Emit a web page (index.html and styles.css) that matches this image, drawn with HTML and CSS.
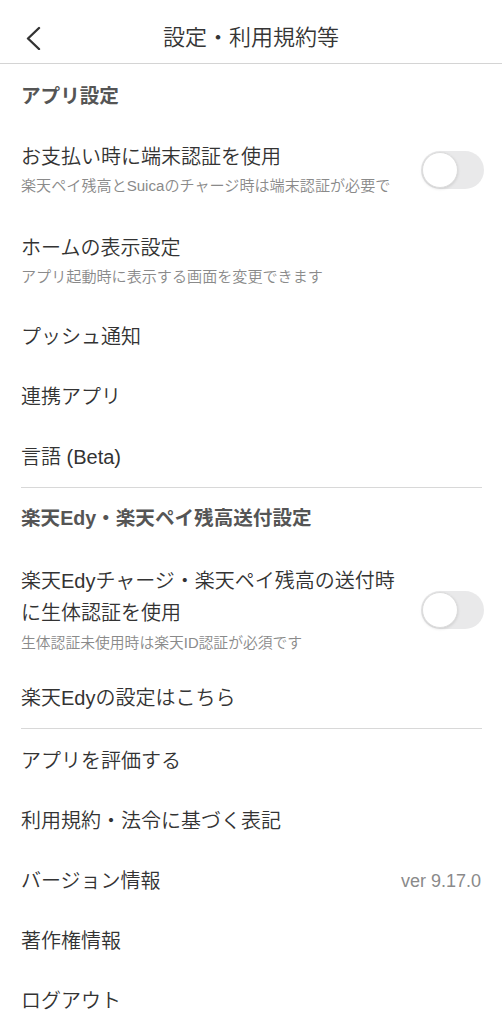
FILE: index.html
```html
<!DOCTYPE html>
<html lang="ja">
<head>
<meta charset="utf-8">
<title>設定・利用規約等</title>
<link rel="stylesheet" href="styles.css">
</head>
<body>
<header class="topbar">
  <div class="back">
    <svg width="16" height="24" viewBox="0 0 16 24"><polyline points="13,2 2,12.5 13,23" fill="none" stroke="#333" stroke-width="2.4" stroke-linecap="round" stroke-linejoin="round"/></svg>
  </div>
  <h1 class="title">設定・利用規約等</h1>
  <div></div>
</header>
<main class="list">
  <div class="section-head first">アプリ設定</div>
  <div class="item sub-item item-a">
    <div class="texts">
      <div class="label">お支払い時に端末認証を使用</div>
      <div class="sub">楽天ペイ残高とSuicaのチャージ時は端末認証が必要で</div>
    </div>
    <div class="toggle"><span class="knob"></span></div>
  </div>
  <div class="item sub-item item-b">
    <div class="texts">
      <div class="label">ホームの表示設定</div>
      <div class="sub">アプリ起動時に表示する画面を変更できます</div>
    </div>
  </div>
  <div class="item row">プッシュ通知</div>
  <div class="item row">連携アプリ</div>
  <div class="item row">言語 (Beta)</div>
  <hr class="divider">
  <div class="section-head">楽天Edy・楽天ペイ残高送付設定</div>
  <div class="item sub-item item-c">
    <div class="texts">
      <div class="label tall">楽天Edyチャージ・楽天ペイ残高の送付時<br>に生体認証を使用</div>
      <div class="sub">生体認証未使用時は楽天ID認証が必須です</div>
    </div>
    <div class="toggle"><span class="knob"></span></div>
  </div>
  <div class="item row">楽天Edyの設定はこちら</div>
  <hr class="divider lower">
  <div class="item row">アプリを評価する</div>
  <div class="item row">利用規約・法令に基づく表記</div>
  <div class="item row split"><span>バージョン情報</span><span class="value">ver 9.17.0</span></div>
  <div class="item row">著作権情報</div>
  <div class="item row">ログアウト</div>
</main>
</body>
</html>
```
FILE: styles.css
```css
html, body {
  margin: 0;
  padding: 0;
  background: #fff;
}
body {
  width: 502px;
  height: 1024px;
  overflow: hidden;
  font-family: "Liberation Sans", "Noto Sans CJK JP", sans-serif;
  font-weight: 350;
  color: #333;
}
.topbar {
  display: grid;
  grid-template-columns: 1fr auto 1fr;
  align-items: center;
  height: 50px;
  padding-top: 13px;
  border-bottom: 1px solid #d4d4d4;
}
.back {
  padding-left: 26px;
  display: flex;
  align-items: center;
}
.title {
  margin: 0;
  font-size: 22px;
  font-weight: 350;
  color: #353535;
  line-height: 30px;
}
.list {
  display: flex;
  flex-direction: column;
}
.section-head {
  padding: 0 21px;
  font-size: 19.6px;
  font-weight: 700;
  color: #555;
  height: 60px;
  line-height: 60px;
}
.section-head.first {
  height: 64px;
  line-height: 64px;
}
.item {
  padding: 0 20px 0 21px;
  font-size: 20px;
}
.row {
  height: 60px;
  line-height: 60px;
}
.split {
  display: flex;
  justify-content: space-between;
}
.value {
  font-size: 18px;
  color: #8a8a8a;
  padding-right: 1px;
}
.sub-item {
  display: flex;
  align-items: center;
  gap: 18px;
}
.texts {
  flex: 1;
  min-width: 0;
  display: flex;
  flex-direction: column;
}
.label {
  line-height: 28px;
}
.label.tall {
  line-height: 32px;
}
.sub {
  font-size: 15.1px;
  line-height: 22px;
  color: #8a8a8a;
  margin-top: 4px;
  white-space: nowrap;
}
.item-a {
  padding-top: 15px;
  padding-bottom: 22px;
}
.item-b {
  padding-top: 15px;
  padding-bottom: 19px;
}
.item-c {
  padding-top: 17px;
  padding-bottom: 14px;
}
.item-c .sub {
  margin-top: 3px;
  font-size: 14.8px;
}
.toggle {
  flex: none;
  width: 63px;
  height: 38px;
  border-radius: 19px;
  background: #e9e9ea;
  display: flex;
  align-items: center;
  margin-right: -2px;
}
.knob {
  width: 36px;
  height: 36px;
  border-radius: 50%;
  background: #fff;
  box-sizing: border-box;
  border: 1px solid #dcdcdc;
  box-shadow: 0 1px 3px rgba(0,0,0,0.12);
  margin-left: 1px;
}
.divider {
  margin: 0 20px 0 21px;
  border: none;
  border-top: 1px solid #d8d8d8;
  height: 0;
}
.divider.lower {
  margin-bottom: 2px;
}
```
